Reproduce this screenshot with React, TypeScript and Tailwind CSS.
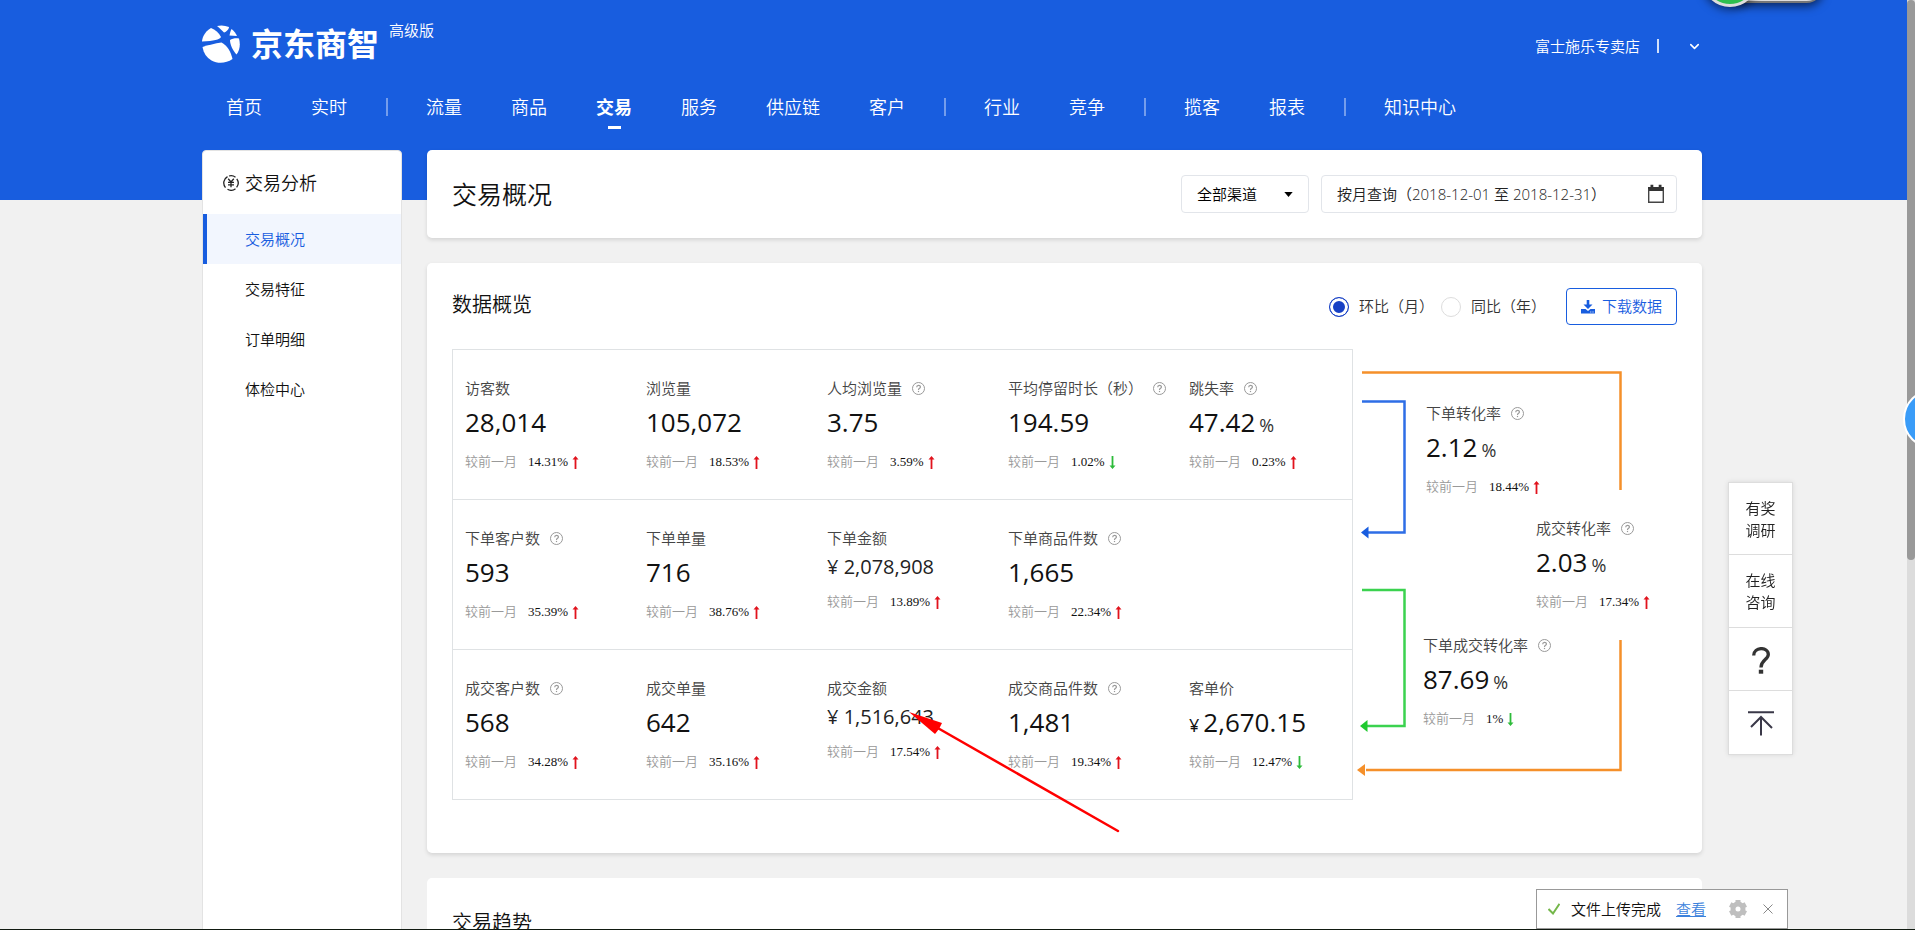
import { useState } from 'react';
import { ChevronDown } from 'lucide-react';

type Trend = 'up' | 'down';

interface Metric {
  label: string;
  value: string;
  change: string;
  trend: Trend;
  help?: boolean;
  prefix?: string;
  unit?: string;
  small?: boolean;
}

const navGroups = [
  ['首页', '实时'],
  ['流量', '商品', '交易', '服务', '供应链', '客户'],
  ['行业', '竞争'],
  ['揽客', '报表'],
  ['知识中心'],
];

const sideItems = ['交易概况', '交易特征', '订单明细', '体检中心'];

const metricRows: Metric[][] = [
  [
    { label: '访客数', value: '28,014', change: '14.31%', trend: 'up' },
    { label: '浏览量', value: '105,072', change: '18.53%', trend: 'up' },
    { label: '人均浏览量', value: '3.75', change: '3.59%', trend: 'up', help: true },
    { label: '平均停留时长（秒）', value: '194.59', change: '1.02%', trend: 'down', help: true },
    { label: '跳失率', value: '47.42', unit: '%', change: '0.23%', trend: 'up', help: true },
  ],
  [
    { label: '下单客户数', value: '593', change: '35.39%', trend: 'up', help: true },
    { label: '下单单量', value: '716', change: '38.76%', trend: 'up' },
    { label: '下单金额', value: '¥ 2,078,908', change: '13.89%', trend: 'up', small: true },
    { label: '下单商品件数', value: '1,665', change: '22.34%', trend: 'up', help: true },
  ],
  [
    { label: '成交客户数', value: '568', change: '34.28%', trend: 'up', help: true },
    { label: '成交单量', value: '642', change: '35.16%', trend: 'up' },
    { label: '成交金额', value: '¥ 1,516,643', change: '17.54%', trend: 'up', small: true },
    { label: '成交商品件数', value: '1,481', change: '19.34%', trend: 'up', help: true },
    { label: '客单价', value: '2,670.15', prefix: '¥', change: '12.47%', trend: 'down' },
  ],
];

const orderRate: Metric = { label: '下单转化率', value: '2.12', unit: '%', change: '18.44%', trend: 'up', help: true };
const dealRate: Metric = { label: '成交转化率', value: '2.03', unit: '%', change: '17.34%', trend: 'up', help: true };
const orderDealRate: Metric = { label: '下单成交转化率', value: '87.69', unit: '%', change: '1%', trend: 'down', help: true };

function Logo() {
  return (
    <svg className="h-[38px] w-[38px]" viewBox="0 0 38 38" fill="#fff" aria-hidden="true">
      <path d="M0 16 C1 10 4 6 9 3 C13 4.500 17 8 19 12 C17.500 14.500 12 16 0 16.500 Z" />
      <path d="M15 1 C19 0 23 .3 27 2 C27 4 24.500 7 22 7.500 C20 5.500 18 3.500 15 1 Z" />
      <path d="M29.500 4 C32 6 34 8.500 35 11 L27.500 10.500 C28 8 28.500 6 29.500 4 Z" />
      <path d="M28 15 C30 13.500 34 13 37 13.500 C38.500 19 38 25 34.500 29.500 C31 25.500 28 20 28 15 Z" />
      <path d="M.5 22 C6 20 13 18.500 19.500 17.500 C25 20 29 27 30.500 34 C24 38.500 16 39 9.500 35.500 C4.500 32.500 1.500 28 .5 22 Z" />
    </svg>
  );
}

function HelpIcon() {
  return (
    <svg className="h-[13px] w-[13px] shrink-0" viewBox="0 0 13 13" fill="none" stroke="#999" aria-hidden="true">
      <circle cx="6.5" cy="6.5" r="6" strokeWidth="1" />
      <path d="M4.700 5.200 C4.700 2.700 8.400 2.700 8.400 5 C8.400 6.300 6.500 6.400 6.500 7.900" strokeWidth="1.200" />
      <path d="M6.500 8.900 V10.100" strokeWidth="1.200" />
    </svg>
  );
}

function TrendArrow({ trend }: { trend: Trend }) {
  return trend === 'up' ? (
    <svg className="h-[13px] w-[7px]" viewBox="0 0 7 13" fill="#e1131d" role="img" aria-label="上升">
      <path d="M3.500 0 L6.500 3.500 H4.400 V13 H2.600 V3.500 H.5 Z" />
    </svg>
  ) : (
    <svg className="h-[13px] w-[7px]" viewBox="0 0 7 13" fill="#2dbb3a" role="img" aria-label="下降">
      <path d="M3.500 13 L6.500 9.500 H4.400 V0 H2.600 V9.500 H.5 Z" />
    </svg>
  );
}

function MetricItem({ metric }: { metric: Metric }) {
  return (
    <div className="whitespace-nowrap">
      <div className="flex h-5 items-center gap-[10px] text-[15px] text-[#444]">
        {metric.label}
        {metric.help && <HelpIcon />}
      </div>
      <div
        className={
          metric.small
            ? 'mt-1 h-[30px] text-xl leading-[30px] font-normal text-[#222]'
            : 'mt-1 flex h-10 items-baseline gap-1 text-[26px] leading-10 font-normal text-[#111]'
        }
      >
        {metric.prefix && <span className="text-lg leading-10">{metric.prefix}</span>}
        {metric.value}
        {metric.unit && <span className="text-lg leading-10 text-[#333]">{metric.unit}</span>}
      </div>
      <div className="mt-[10px] flex h-5 items-center">
        <span className="text-[13px] text-[#999]">较前一月</span>
        <span className="ml-[11px] font-['Liberation_Serif',serif] text-[13px] font-normal text-[#111]">{metric.change}</span>
        <span className="ml-1 flex">
          <TrendArrow trend={metric.trend} />
        </span>
      </div>
    </div>
  );
}

function Header() {
  return (
    <header className="h-[150px] text-white">
      <div className="flex h-[88px] justify-between">
        <div className="flex pt-[25px]">
          <Logo />
          <span className="ml-[11px] text-[32px] leading-[38px] font-bold">京东商智</span>
          <span className="ml-[10px] h-5 text-[15px] leading-[10px]">高级版</span>
        </div>
        <div className="flex h-[92px] items-center text-[15px]">
          <span>富士施乐专卖店</span>
          <span className="ml-[17px] h-[14px] w-[2px] bg-white/80" />
          <button type="button" aria-label="展开账户菜单" className="ml-7">
            <ChevronDown className="h-[15px] w-[15px]" strokeWidth={2.5} />
          </button>
        </div>
      </div>
      <nav className="flex items-start gap-[38px] pl-6 text-lg">
        {navGroups.map((group, i) => (
          <div key={group[0]} className="flex items-start gap-[38px]">
            {i > 0 && <span className="mt-[10px] ml-px h-[18px] w-[2px] bg-white/40" />}
            <div className="flex gap-[49px]">
              {group.map((item) =>
                item === '交易' ? (
                  <a key={item} href="#" className="flex flex-col items-center leading-[38px] font-bold">
                    {item}
                    <span className="h-[3px] w-[13px] bg-white" />
                  </a>
                ) : (
                  <a key={item} href="#" className="leading-[38px]">
                    {item}
                  </a>
                ),
              )}
            </div>
          </div>
        ))}
      </nav>
    </header>
  );
}

function Sidebar() {
  return (
    <aside className="w-[200px] shrink-0 rounded-t-[4px] border border-[#e3e3e3] bg-white text-[#111]">
      <h2 className="flex h-[63px] items-center gap-[6px] pl-5 text-lg">
        <svg className="h-4 w-4" viewBox="0 0 16 16" fill="none" stroke="#222" strokeWidth="1.300" aria-hidden="true">
          <path d="M4.500 1.600 A7.200 7.200 0 0 0 2.500 12.600 M4.500 14.300 A7.200 7.200 0 0 0 12.500 13.700 M13.600 12.400 A7.200 7.200 0 0 0 13.800 3.800 M12.500 2.300 A7.200 7.200 0 0 0 6 1" />
          <path d="M5.200 3.800 L8 7 L10.800 3.800 M8 7 V12.300 M5 7.400 H11 M5 9.800 H11" />
        </svg>
        交易分析
      </h2>
      <ul className="text-[15px]">
        {sideItems.map((item, i) => (
          <li key={item}>
            <a
              href="#"
              className={
                i === 0
                  ? 'block border-l-4 border-[#185ddf] bg-[#f2f6fe] pl-[38px] leading-[50px] text-[#185ddf]'
                  : 'block border-l-4 border-transparent pl-[38px] leading-[50px]'
              }
            >
              {item}
            </a>
          </li>
        ))}
      </ul>
    </aside>
  );
}

function TitleCard() {
  return (
    <section className="flex items-center justify-between rounded-[5px] bg-white p-[25px] shadow-[0_2px_4px_rgba(0,0,0,0.12)]">
      <h1 className="text-[25px] leading-[38px] text-[#111]">交易概况</h1>
      <div className="flex gap-3 text-[15px]">
        <div className="relative">
          <select
            aria-label="渠道"
            className="h-[38px] w-32 appearance-none rounded-[4px] border border-[#e2e5ea] bg-white pl-[15px] text-black"
          >
            <option>全部渠道</option>
          </select>
          <svg className="pointer-events-none absolute top-[17px] right-4 h-[5px] w-[9px]" viewBox="0 0 10 6" aria-hidden="true">
            <path d="M0 0 H10 L5 6 Z" />
          </svg>
        </div>
        <button
          type="button"
          className="flex h-[38px] w-[356px] items-center justify-between rounded-[4px] border border-[#e2e5ea] pr-[11px] pl-[15px] text-[#222]"
        >
          按月查询（2018-12-01 至 2018-12-31）
          <svg className="h-5 w-[18px]" viewBox="0 0 18 20" aria-hidden="true">
            <path d="M1 3 H17 V7 H1 Z M3.500 .8 H6.300 V4 H3.500 Z M11.700 .8 H14.500 V4 H11.700 Z" fill="#333" />
            <path d="M1.700 5 V18.300 H16.300 V5" fill="none" stroke="#444" strokeWidth="1.400" />
          </svg>
        </button>
      </div>
    </section>
  );
}

function ConversionFlow() {
  return (
    <div className="relative w-[324px] shrink-0">
      <svg className="absolute inset-0 h-[450px] w-[324px]" viewBox="0 0 324 450" fill="none" strokeWidth="2.500" aria-hidden="true">
        <path d="M9 23.500 H267.500 V141 M267.500 291 V421 H13" stroke="#f5902a" />
        <path d="M4 421 L12 415 V427 Z" fill="#f5902a" />
        <path d="M9 52.500 H51.500 V183.500 H15" stroke="#2e6ee6" />
        <path d="M8 183.500 L15.500 177.500 V189.500 Z" fill="#185ddf" />
        <path d="M9 241 H51.500 V377 H14" stroke="#3bd24f" />
        <path d="M7 377 L14.500 371 V383 Z" fill="#1fc92f" />
      </svg>
      <div className="absolute top-[54px] left-[73px]">
        <MetricItem metric={orderRate} />
      </div>
      <div className="absolute top-[169px] left-[183px]">
        <MetricItem metric={dealRate} />
      </div>
      <div className="absolute top-[286px] left-[70px]">
        <MetricItem metric={orderDealRate} />
      </div>
    </div>
  );
}

function OverviewCard() {
  const [compare, setCompare] = useState('month');
  const radioClass =
    'h-5 w-5 appearance-none rounded-full border border-[#ddd] bg-white checked:border-[#1740c5] checked:bg-[#1740c5] checked:shadow-[inset_0_0_0_3px_#fff]';

  return (
    <section className="rounded-[5px] bg-white px-[25px] pt-[25px] pb-[53px] shadow-[0_2px_4px_rgba(0,0,0,0.12)]">
      <div className="flex h-[37px] items-center justify-between">
        <h2 className="h-8 text-xl text-[#111]">数据概览</h2>
        <div className="flex items-center text-[15px] text-[#333]">
          <label className="flex items-center gap-[10px]">
            <input
              type="radio"
              name="compare"
              className={radioClass}
              checked={compare === 'month'}
              onChange={() => setCompare('month')}
            />
            环比（月）
          </label>
          <label className="ml-[7px] flex items-center gap-[10px]">
            <input
              type="radio"
              name="compare"
              className={radioClass}
              checked={compare === 'year'}
              onChange={() => setCompare('year')}
            />
            同比（年）
          </label>
          <button
            type="button"
            className="ml-5 flex h-[37px] w-[111px] items-center justify-center gap-[7px] rounded-[4px] border border-[#185ddf] text-[#185ddf]"
          >
            <svg className="h-[14px] w-[14px]" viewBox="0 0 14 14" fill="currentColor" aria-hidden="true">
              <path d="M5.700 0 H8.300 V4.500 H11.500 L7 9 L2.500 4.500 H5.700 Z" />
              <path d="M0 9 H4.500 L7 11 L9.500 9 H14 V13.500 H0 Z M9.300 11.500 V12.500 H10.300 V11.500 Z M11.500 11.500 V12.500 H12.500 V11.500 Z" fillRule="evenodd" />
            </svg>
            下载数据
          </button>
        </div>
      </div>
      <div className="mt-6 flex">
        <div className="flex-1 border-x border-b border-[#dfe2e4]">
          {metricRows.map((row) => (
            <div
              key={row[0].label}
              className="grid grid-cols-[181fr_181fr_181fr_181fr_163fr] border-t border-[#dfe2e4] pt-7 pb-[27px] pl-3"
            >
              {row.map((metric) => (
                <MetricItem key={metric.label} metric={metric} />
              ))}
            </div>
          ))}
        </div>
        <ConversionFlow />
      </div>
    </section>
  );
}

function FloatingTools() {
  return (
    <div className="fixed top-[482px] right-[122px] flex w-[65px] flex-col divide-y divide-[#ddd] border border-[#ddd] bg-white text-[15px] leading-[22px] text-[#222] shadow-[0_0_5px_rgba(0,0,0,0.1)]">
      <button type="button" className="h-[72px]">有奖<br />调研</button>
      <button type="button" className="h-[73px]">在线<br />咨询</button>
      <button type="button" aria-label="帮助" className="flex h-[63px] items-center justify-center pt-[3px]">
        <svg className="h-[27px] w-[18px]" viewBox="0 0 18 27" fill="none" stroke="#333" strokeWidth="3.300" aria-hidden="true">
          <path d="M1.700 8.500 C1.700 -.5 16.300 -.5 16.300 7.500 C16.300 12.500 9 13 9 20.500" />
          <path d="M6.800 24.700 H11.200" strokeWidth="4" />
        </svg>
      </button>
      <button type="button" aria-label="回到顶部" className="flex h-[63px] items-center justify-center">
        <svg className="h-[26px] w-[28px]" viewBox="0 0 28 26" fill="none" stroke="#3a3848" strokeWidth="2" aria-hidden="true">
          <path d="M1 2.200 H27 M14 25.500 V7 M4 17 L14 7 L25 18" />
        </svg>
      </button>
    </div>
  );
}

function UploadToast() {
  return (
    <div className="fixed right-[127px] bottom-px flex h-10 w-[252px] items-center border border-[#999] bg-white text-[15px] text-[#111]">
      <svg className="ml-[11px] h-3 w-3" viewBox="0 0 12 12" fill="none" stroke="#74b74a" strokeWidth="2" aria-hidden="true">
        <path d="M.5 6 L5 10.500 L11.500 .8" />
      </svg>
      <span className="ml-[11px]">文件上传完成</span>
      <a href="#" className="ml-[15px] text-[#3b82dc] underline">查看</a>
      <button type="button" aria-label="设置" className="ml-[23px]">
        <svg className="h-[18px] w-[18px]" viewBox="0 0 18 18" fill="none" aria-hidden="true">
          <circle cx="9" cy="9" r="5" stroke="#bfbfbf" strokeWidth="5" />
          <path d="M9 0 V3 M9 15 V18 M1.200 4.500 L4 6 M14 12 L16.800 13.500 M1.200 13.500 L4 12 M14 6 L16.800 4.500" stroke="#bfbfbf" strokeWidth="5" />
        </svg>
      </button>
      <button type="button" aria-label="关闭" className="ml-4">
        <svg className="h-[10px] w-[10px]" viewBox="0 0 10 10" stroke="#888" aria-hidden="true">
          <path d="M.5 .5 L9.500 9.500 M9.500 .5 L.5 9.500" />
        </svg>
      </button>
    </div>
  );
}

export default function App() {
  return (
    <div className="relative h-screen overflow-hidden bg-[#f1f1f1] font-['Open_Sans','Noto_Sans_CJK_SC',sans-serif] font-[350]">
      <div className="absolute inset-x-0 top-0 h-[200px] bg-[#185ddf]" />
      <div className="relative pr-[11px]">
        <div className="mx-auto max-w-[1500px]">
          <Header />
          <div className="flex gap-[25px]">
            <Sidebar />
            <main className="flex flex-1 flex-col gap-[25px]">
              <TitleCard />
              <OverviewCard />
              <section className="rounded-[5px] bg-white p-[25px]">
                <h2 className="text-xl leading-10 text-[#111]">交易趋势</h2>
              </section>
            </main>
          </div>
        </div>
      </div>

      {/* hand-drawn pointer at the deal amount */}
      <svg className="pointer-events-none absolute top-[710px] left-[908px] h-[124px] w-[212px]" viewBox="0 0 212 124" aria-hidden="true">
        <path d="M28 17 L210 121" stroke="#f00" strokeWidth="2.500" strokeLinecap="round" />
        <path d="M1 2 L34 13 L31 19 L27 24 Z" fill="#f00" />
      </svg>

      <FloatingTools />
      <UploadToast />

      {/* desktop widget peeking in from the top */}
      <div className="fixed -top-[30px] right-[92px] h-[33px] w-24 rounded-full border-b-2 border-[#777] bg-[#ddd] shadow-[0_3px_10px_rgba(0,0,0,0.6)]" />
      <div className="fixed -top-[49px] right-[157px] h-14 w-14 rounded-full border-[3px] border-[#ddd] bg-[#2fbf4f] shadow-[0_3px_8px_rgba(0,0,0,0.5)]" />

      <div className="fixed top-0 right-0 bottom-0 w-2 bg-[#dcdcdc]">
        <div className="h-[560px] rounded-full bg-[#999]" />
      </div>
      <div className="fixed top-[389px] -right-12 h-[60px] w-[60px] rounded-full border-2 border-white bg-[#3a9cf8]" />
      <div className="fixed inset-x-0 bottom-0 h-px bg-[#111a11]" />
    </div>
  );
}
